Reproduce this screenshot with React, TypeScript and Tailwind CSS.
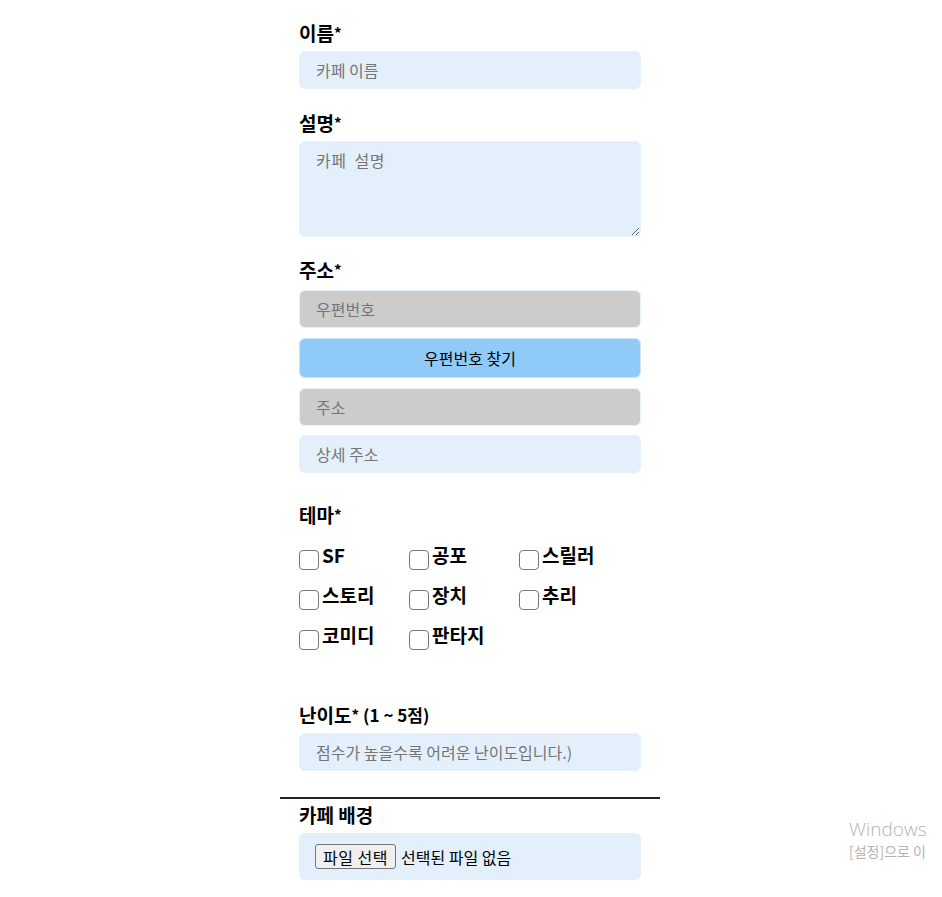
import React from "react";

const font = { fontFamily: '"Noto Sans CJK KR", "Noto Sans", sans-serif' };

function Label({ children, extra }: { children: React.ReactNode; extra?: React.ReactNode }) {
  return (
    <div className="h-6 leading-6 text-[19px] font-bold text-black flex items-center">
      <span>{children}</span>
      <span className="text-[15px] font-bold">*</span>
      {extra}
    </div>
  );
}

const inputBase =
  "w-full h-[38px] rounded-md border border-[#e3f2fd] px-4 text-[16px] outline-none placeholder:text-[#757575]";

function Check({ label }: { label: string }) {
  return (
    <label className="flex items-start w-[110px] h-10">
      <span className="mt-[9px] w-5 h-5 rounded-[4px] border border-[#767676] bg-white shrink-0" />
      <span className="ml-[3px] text-[19px] font-bold leading-6 mt-[2px]">{label}</span>
    </label>
  );
}

export default function App() {
  return (
    <div className="relative min-h-[897px] bg-white overflow-hidden" style={font}>
      <div className="w-[380px] ml-[280px] pt-[21px] flex flex-col">
        <div className="px-[19px] flex flex-col">
          <Label>이름</Label>
          <input className={`${inputBase} mt-[6px] bg-[#e3f0fb]`} placeholder="카페 이름" />

          <div className="mt-[22px]">
            <Label>설명</Label>
          </div>
          <textarea
            className="mt-[6px] w-full h-[96px] rounded-md border border-[#e3f2fd] bg-[#e3f0fb] px-4 py-[6px] text-[16px] tracking-[0.5px] outline-none placeholder:text-[#757575] block"
            placeholder="카페  설명"
          />

          <div className="mt-[21px]">
            <Label>주소</Label>
          </div>
          <input className={`${inputBase} mt-[8px] h-[37px] bg-[#cccccc] border-[#d6e6f4]`} placeholder="우편번호" readOnly />
          <button className="mt-[10px] w-full h-[40px] rounded-md bg-[#90caf9] border border-[#cfe3f5] text-[16px] text-black">
            우편번호 찾기
          </button>
          <input className={`${inputBase} mt-[10px] h-[37px] bg-[#cccccc] border-[#d6e6f4]`} placeholder="주소" readOnly />
          <input className={`${inputBase} mt-[9px] bg-[#e3f0fb]`} placeholder="상세 주소" />

          <div className="mt-[30px]">
            <Label>테마</Label>
          </div>
          <div className="mt-[14px] grid grid-cols-3 w-[330px]">
            <Check label="SF" />
            <Check label="공포" />
            <Check label="스릴러" />
            <Check label="스토리" />
            <Check label="장치" />
            <Check label="추리" />
            <Check label="코미디" />
            <Check label="판타지" />
          </div>

          <div className="mt-[42px]">
            <Label extra={<span className="ml-1 text-[17px] font-semibold">(1 ~ 5점)</span>}>난이도</Label>
          </div>
          <input
            className={`${inputBase} mt-[6px] bg-[#e3f0fb]`}
            placeholder="점수가 높을수록 어려운 난이도입니다.)"
          />
        </div>

        <div className="mt-[26px] h-[2px] bg-[#222]" />

        <div className="px-[19px] flex flex-col">
          <div className="mt-[4px] h-6 leading-6 text-[19px] font-bold">카페 배경</div>
          <div className="mt-[6px] h-[47px] rounded-md bg-[#e3f0fb] flex items-center px-4">
            <span className="h-[25px] px-[7px] flex items-center border border-[#767676] rounded-[3px] bg-[#efefef] text-[16px] tracking-[0.5px]">
              파일 선택
            </span>
            <span className="ml-[5px] text-[16px]">선택된 파일 없음</span>
          </div>
        </div>
      </div>

      <div className="absolute left-[849px] top-[817px] w-[93px] overflow-hidden text-[#b3b3b3] whitespace-nowrap">
        <div className="h-[24px] leading-[24px] text-[19px] font-light" style={{ fontFamily: '"Open Sans", sans-serif' }}>
          Windows
        </div>
        <div className="h-[20px] leading-[20px] text-[14px]">[설정]으로 이</div>
      </div>
    </div>
  );
}
